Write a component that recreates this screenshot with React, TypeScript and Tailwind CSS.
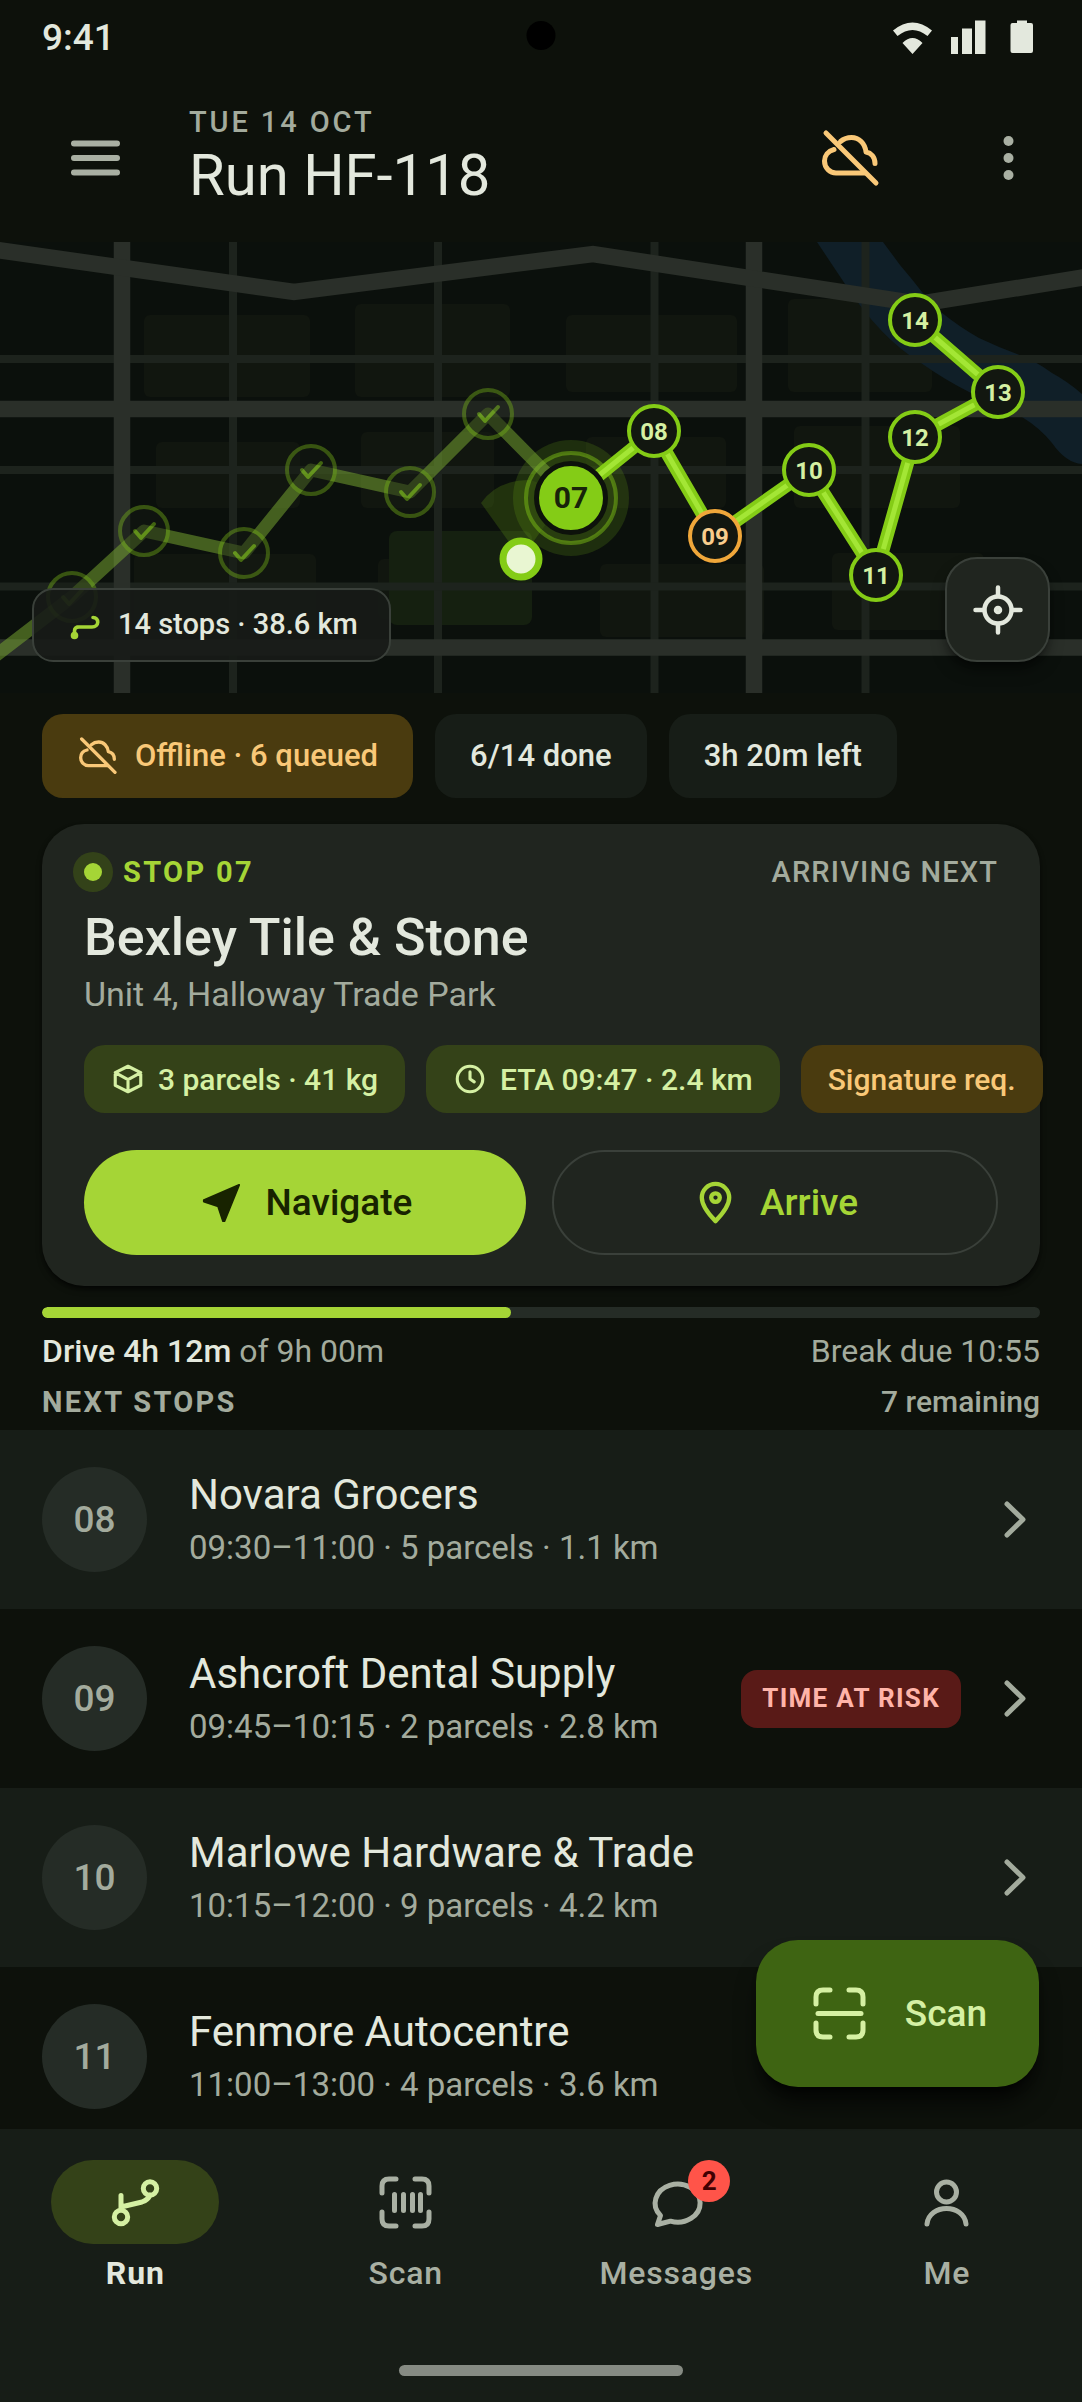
import { ReactNode } from "react";

type IconProps = { className?: string };

const upcoming = [
  { id: "08", x: 654, y: 189 },
  { id: "09", x: 715, y: 294, warn: true },
  { id: "10", x: 809, y: 228 },
  { id: "11", x: 876, y: 333 },
  { id: "12", x: 915, y: 195 },
  { id: "13", x: 998, y: 150 },
  { id: "14", x: 915, y: 78 },
];

const visited = [
  { x: 72, y: 355 },
  { x: 144, y: 289 },
  { x: 244, y: 311 },
  { x: 311, y: 228 },
  { x: 410, y: 250 },
  { x: 488, y: 172 },
];

const blocks = [
  [144, 73, 166, 82],
  [355, 62, 155, 93],
  [156, 200, 144, 66],
  [361, 190, 133, 76],
  [134, 312, 182, 76],
  [378, 317, 140, 60],
  [566, 73, 171, 77],
  [788, 57, 144, 93],
  [586, 195, 140, 71],
  [794, 184, 166, 82],
  [600, 322, 164, 73],
  [832, 311, 152, 77],
];

const stops = [
  { id: "08", name: "Novara Grocers", info: "09:30–11:00 · 5 parcels · 1.1 km" },
  {
    id: "09",
    name: "Ashcroft Dental Supply",
    info: "09:45–10:15 · 2 parcels · 2.8 km",
    risk: "TIME AT RISK",
  },
  { id: "10", name: "Marlowe Hardware & Trade", info: "10:15–12:00 · 9 parcels · 4.2 km" },
  { id: "11", name: "Fenmore Autocentre", info: "11:00–13:00 · 4 parcels · 3.6 km" },
];

function Icon({ className, box = 63, width = 5, children }: IconProps & { box?: number; width?: number; children: ReactNode }) {
  return (
    <svg
      viewBox={`0 0 ${box} ${box}`}
      className={className}
      fill="none"
      stroke="currentColor"
      strokeWidth={width}
      strokeLinecap="round"
      strokeLinejoin="round"
      aria-hidden="true"
    >
      {children}
    </svg>
  );
}

const CloudOff = ({ className }: IconProps) => (
  <Icon className={className}>
    <path d="M21.5 14.5C25 11.5 29 10.5 32.5 10.5C40 10.5 46 16.5 47 25C52 26 56 30 56 36.5" />
    <path d="M15 22.5C9 24 5.5 28.5 5.5 34C5.5 41 11 46 17 46H46" />
    <path d="M7 6L57 56" />
  </Icon>
);

const RunIcon = ({ className }: IconProps) => (
  <Icon className={className}>
    <circle cx="17" cy="46" r="6.7" />
    <circle cx="46" cy="17.5" r="6.7" />
    <path d="M17 24.5V38M17 36L38 31Q44 29 46 24" />
  </Icon>
);

const corners = "M8 22V15Q8 8 15 8H22M41 8H48Q55 8 55 15V22M55 41V48Q55 55 48 55H41M22 55H15Q8 55 8 48V41";

const BarcodeIcon = ({ className }: IconProps) => (
  <Icon className={className}>
    <path d={corners} />
    <path d="M20.5 23.5V39.5M29.5 23.5V39.5M38.5 23.5V39.5M46.5 23.5V39.5" />
  </Icon>
);

const ScanIcon = ({ className }: IconProps) => (
  <Icon className={className}>
    <path d={corners} />
    <path d="M10 31.5H53" />
  </Icon>
);

const MessageIcon = ({ className }: IconProps) => (
  <Icon className={className}>
    <path d="M25.5 50.2A22.5 19 0 1 0 15.5 44.5L12.5 53.5Z" />
  </Icon>
);

const PersonIcon = ({ className }: IconProps) => (
  <Icon className={className}>
    <circle cx="31.5" cy="21" r="10" />
    <path d="M12 53C13 43 22 37.5 31.5 37.5S50 43 51 53" />
  </Icon>
);

function StatusBar() {
  return (
    <div className="relative flex h-[74px] items-center justify-between pr-[48px] pl-[42px]">
      <span className="text-[37px] leading-none font-medium">9:41</span>
      <span className="absolute top-[21px] left-1/2 size-[29px] -translate-x-1/2 rounded-full bg-black" />
      <svg viewBox="0 0 142 36" className="h-[36px] w-[142px] fill-[#e3e8dd]" aria-hidden="true">
        <path d="M1 11.5Q20.5 -4.5 40 11.5L35.5 17Q20.5 5 5.5 17ZM10.5 24Q20.5 14 30.5 24L20.5 35Z" />
        <path d="M59 18H66V35H59ZM70 9.5H80V35H70ZM83 1.5H93.5V35H83Z" />
        <path d="M125 1.5H135V4H139Q141 4 141 6V32Q141 34 139 34H120.5Q118.5 34 118.5 32V6Q118.5 4 120.5 4H125Z" />
      </svg>
    </div>
  );
}

function Header() {
  return (
    <header className="flex h-[168px] items-center pr-[11px] pl-8">
      <button aria-label="Menu" className="grid size-[126px] place-items-center text-[#a9b0a3]">
        <Icon className="size-[63px]" width={6}>
          <path d="M10 16.5H53M10 31H53M10 45.5H53" />
        </Icon>
      </button>
      <div className="ml-[31px] flex-1 pb-2">
        <p className="text-[29px] leading-[42px] font-medium tracking-[0.1em] text-[#a3ab9d]">TUE 14 OCT</p>
        <h1 className="text-[58px] leading-[64px]">Run HF-118</h1>
      </div>
      <button aria-label="Offline" className="mr-8 grid size-[126px] place-items-center text-[#f9c878]">
        <CloudOff className="size-[63px]" />
      </button>
      <button aria-label="More" className="grid size-[126px] place-items-center text-[#a9b0a3]">
        <svg viewBox="0 0 63 63" className="size-[63px] fill-current" aria-hidden="true">
          <circle cx="31.5" cy="14" r="5" />
          <circle cx="31.5" cy="31" r="5" />
          <circle cx="31.5" cy="48" r="5" />
        </svg>
      </button>
    </header>
  );
}

function RouteMap() {
  const path = (points: { x: number; y: number }[]) => points.map((p) => `${p.x},${p.y}`).join(" ");
  const current = { x: 571, y: 256 };

  return (
    <section aria-label="Route map" className="relative h-[451px] overflow-hidden bg-[#0b100c]">
      <svg viewBox="0 0 1082 451" preserveAspectRatio="xMidYMid slice" className="size-full">
        {blocks.map(([x, y, w, h]) => (
          <rect key={`${x}-${y}`} x={x} y={y} width={w} height={h} rx="6" fill="#11160f" />
        ))}
        <rect x="389" y="289" width="143" height="94" rx="8" fill="#152010" />
        <path
          d="M817 0L845 42Q880 96 921 121Q945 138 971 151Q1003 162 1022 175Q1040 186 1052 201Q1066 221 1082 222V152Q1067 139 1052 131Q1036 119 1017 112Q998 105 979 96Q958 84 941 70Q932 61 922 50Q912 37 900 23L883 0Z"
          fill="#101f28"
        />
        <g stroke="#1d231d" strokeWidth="8">
          <path d="M233 0V451M438 0V451M654.5 0V451M865.5 0V451" />
          <path d="M0 117H1082M0 228H1082M0 344.5H1082" />
        </g>
        <g stroke="#2a2f29" strokeWidth="16.5" fill="none">
          <path d="M122 0V451M754 0V451M0 167H1082M0 405.5H1082" />
          <path d="M-10 7L294 50L593 12L919 62L1092 34" />
        </g>

        <path d="M521 317L481 261Q497 238 530 238Q549 243 561 261Z" fill="#84cc16" opacity="0.18" />
        <circle cx="571" cy="256" r="58" fill="#84cc16" opacity="0.16" />
        <circle cx="571" cy="256" r="45" fill="#2f4811" fillOpacity="0.6" stroke="#84cc16" strokeOpacity="0.45" strokeWidth="4" />
        <polyline
          points={path([{ x: -40, y: 441 }, ...visited, current])}
          fill="none"
          stroke="#78a832"
          strokeWidth="13"
          strokeLinejoin="round"
          opacity="0.52"
        />
        {visited.map((p) => (
          <g key={p.x} opacity="0.45">
            <circle cx={p.x} cy={p.y} r="24" fill="#161b14" stroke="#6fa818" strokeWidth="4" />
            <path
              d={`M${p.x - 9} ${p.y}l6 7l13 -14`}
              fill="none"
              stroke="#84cc16"
              strokeWidth="4"
              strokeLinecap="round"
              strokeLinejoin="round"
            />
          </g>
        ))}

        <polyline points={path([current, ...upcoming])} fill="none" stroke="#84cc16" strokeWidth="13" strokeLinejoin="round" />
        <polyline points={path([current, ...upcoming])} fill="none" stroke="#a3e635" strokeWidth="5" strokeLinejoin="round" />
        {upcoming.map((p) => (
          <g key={p.id}>
            <circle cx={p.x} cy={p.y} r="25" fill="#121710" stroke={p.warn ? "#f0a73a" : "#84cc16"} strokeWidth="4" />
            <text
              x={p.x}
              y={p.y + 9}
              textAnchor="middle"
              className={`text-[24px] font-bold ${p.warn ? "fill-[#f9cd8d]" : "fill-[#d5f0a3]"}`}
            >
              {p.id}
            </text>
          </g>
        ))}

        <circle cx="571" cy="256" r="34.5" fill="#84cc16" stroke="#0d120b" strokeWidth="5" />
        <text x="571" y="266" textAnchor="middle" className="fill-[#18230a] text-[30px] font-bold">
          07
        </text>
        <circle cx="521" cy="317" r="18" fill="#e9f6d2" stroke="#84cc16" strokeWidth="7" />
      </svg>

      <div className="absolute bottom-[31px] left-8 flex h-[74px] items-center gap-[11px] rounded-[21px] border-2 border-[#3a403a] bg-[#171b17]/90 px-[31px]">
        <Icon className="size-[42px] text-[#a5d536]" box={42} width={3.6}>
          <circle cx="9.5" cy="31.5" r="2" fill="currentColor" />
          <path d="M9.5 31V27Q9.5 23 14 23M12 23H27C34.5 23 34.5 13.5 28 13.5" />
        </Icon>
        <span className="text-[29px] font-medium">14 stops · 38.6 km</span>
      </div>
      <button
        aria-label="My location"
        className="absolute right-8 bottom-[31px] grid size-[105px] place-items-center rounded-[32px] border-2 border-[#3a403a] bg-[#20251f] shadow-lg shadow-black/50"
      >
        <Icon className="size-[52px]" box={52} width={4.5}>
          <circle cx="26" cy="26" r="13.5" />
          <path d="M26 3.5V12M26 40V48.5M3.5 26H12M40 26H48.5" />
          <circle cx="26" cy="26" r="2" />
        </Icon>
      </button>
    </section>
  );
}

function StatusChips() {
  return (
    <div className="flex gap-[22px] px-[42px] pt-[21px] text-[31px] font-medium">
      <span className="flex h-[84px] items-center gap-4 rounded-[21px] bg-[#4a3b0f] px-[35px] text-[#f9c878]">
        <CloudOff className="size-[42px]" />
        Offline · 6 queued
      </span>
      <span className="flex h-[84px] items-center rounded-[21px] bg-[#171d17] px-[35px]">6/14 done</span>
      <span className="flex h-[84px] items-center rounded-[21px] bg-[#171d17] px-[35px]">3h 20m left</span>
    </div>
  );
}

function CurrentStop() {
  return (
    <article className="mx-[42px] mt-[26px] rounded-[42px] bg-[#20251f] px-[42px] pt-[27px] pb-[31px] shadow-md shadow-black/60">
      <div className="flex items-center justify-between text-[29px] leading-[42px]">
        <span className="flex items-center gap-[21px] font-bold tracking-[0.08em] text-[#a5d536]">
          <span className="size-[18px] rounded-full bg-[#a5d536] ring-[11px] ring-[#334219]" />
          STOP 07
        </span>
        <span className="font-medium tracking-[0.04em] text-[#a3ab9d]">ARRIVING NEXT</span>
      </div>
      <h2 className="mt-[11px] text-[52px] leading-[68px] font-medium">Bexley Tile & Stone</h2>
      <p className="text-[34px] leading-[44px] text-[#a3ab9d]">Unit 4, Halloway Trade Park</p>

      <div className="mt-[29px] flex gap-[21px] text-[30px] font-medium whitespace-nowrap">
        <span className="flex h-[68px] shrink-0 items-center gap-[13px] rounded-[21px] bg-[#344218] px-[27px] text-[#d5f0a3]">
          <Icon className="size-[34px]" box={24} width={2.2}>
            <path d="M12 3l9 4.5v9L12 21l-9-4.5v-9zM3 7.5l9 5 9-5M12 12.5V21" />
          </Icon>
          3 parcels · 41 kg
        </span>
        <span className="flex h-[68px] shrink-0 items-center gap-[13px] rounded-[21px] bg-[#344218] px-[27px] text-[#d5f0a3]">
          <Icon className="size-[34px]" box={24} width={2.2}>
            <circle cx="12" cy="12" r="9" />
            <path d="M12 7v5l3 2" />
          </Icon>
          ETA 09:47 · 2.4 km
        </span>
        <span className="flex h-[68px] shrink-0 items-center rounded-[21px] bg-[#4a3b0f] px-[27px] text-[#f9c878]">
          Signature req.
        </span>
      </div>

      <div className="mt-[37px] flex gap-[26px] text-[37px] font-medium">
        <button className="flex h-[105px] flex-1 items-center justify-center gap-[21px] rounded-full bg-[#a5d536] text-[#182300]">
          <Icon className="size-[47px]" box={24} width={1}>
            <path d="M21 3L3 10.8V11.5L10.3 14L12.8 21.5H13.5Z" fill="currentColor" />
          </Icon>
          Navigate
        </button>
        <button className="flex h-[105px] flex-1 items-center justify-center gap-[21px] rounded-full border-2 border-[#3a403a] text-[#a5d536]">
          <Icon className="size-[47px]" box={24} width={2.2}>
            <path d="M12 21.5C8 17.5 5 13.5 5 9.5a7 7 0 0 1 14 0c0 4-3 8-7 12z" />
            <circle cx="12" cy="9.5" r="2.2" />
          </Icon>
          Arrive
        </button>
      </div>
    </article>
  );
}

function DriveTime() {
  return (
    <section className="mx-[42px] mt-[21px]">
      <div className="h-[11px] overflow-hidden rounded-full bg-[#252c26]">
        <div className="h-full w-[47%] rounded-full bg-[#a5d536]" />
      </div>
      <div className="mt-3 flex justify-between text-[32px] leading-[42px] text-[#a3ab9d]">
        <span>
          <b className="font-medium text-[#e3e8dd]">Drive 4h 12m</b> of 9h 00m
        </span>
        <span>Break due 10:55</span>
      </div>
    </section>
  );
}

function NextStops() {
  return (
    <section className="flex min-h-0 flex-1 flex-col">
      <div className="flex justify-between px-[42px] pt-[9px] pb-[7px] leading-[42px] text-[#a3ab9d]">
        <h3 className="text-[29px] font-bold tracking-[0.08em]">NEXT STOPS</h3>
        <span className="text-[30px] font-medium">7 remaining</span>
      </div>
      <div className="relative min-h-0 flex-1">
        <ul className="h-full overflow-y-auto [scrollbar-width:none]">
          {stops.map((stop) => (
            <li key={stop.id} className="odd:bg-[#171d17]">
              <button className="flex h-[179px] w-full items-center pr-[36px] pl-[42px] text-left">
                <span className="grid size-[105px] shrink-0 place-items-center rounded-full bg-[#252c26] text-[37px] font-medium text-[#a3ab9d]">
                  {stop.id}
                </span>
                <span className="ml-[42px] flex-1 pb-[2px]">
                  <span className="block text-[42px] leading-[58px]">{stop.name}</span>
                  <span className="block text-[33px] leading-[48px] text-[#a3ab9d]">{stop.info}</span>
                </span>
                {stop.risk && (
                  <span className="flex h-[58px] items-center rounded-[16px] bg-[#591a17] px-[21px] text-[26px] font-bold tracking-wider text-[#ffb4a9]">
                    {stop.risk}
                  </span>
                )}
                <Icon className="ml-[22px] size-[63px]">
                  <path d="M24 16L40 31.5L24 47" className="stroke-[#a3ab9d]" />
                </Icon>
              </button>
            </li>
          ))}
        </ul>
        <button className="absolute right-[43px] bottom-[42px] flex h-[147px] items-center gap-[34px] rounded-[42px] bg-[#3e6412] px-[52px] text-[37px] font-medium text-[#d5f0a3] shadow-xl shadow-black/70">
          <ScanIcon className="size-[63px]" />
          Scan
        </button>
      </div>
    </section>
  );
}

function NavItem({ label, active, badge, children }: { label: string; active?: boolean; badge?: number; children: ReactNode }) {
  return (
    <a href="#" className={`flex flex-1 flex-col items-center ${active ? "text-[#e3e8dd]" : "text-[#a9b0a3]"}`}>
      <span
        className={`relative grid h-[84px] w-[168px] place-items-center rounded-full ${active ? "bg-[#344218] text-[#d5f0a3]" : ""}`}
      >
        {children}
        {badge && (
          <span className="absolute top-0 right-[30px] grid size-[42px] place-items-center rounded-full bg-[#ff5449] text-[26px] font-bold text-[#410002]">
            {badge}
          </span>
        )}
      </span>
      <span className={`mt-[8px] text-[32px] leading-[42px] tracking-wide ${active ? "font-bold" : "font-medium"}`}>{label}</span>
    </a>
  );
}

function BottomNav() {
  return (
    <footer className="bg-[#171d17] pt-[31px] pb-[26px]">
      <nav className="flex">
        <NavItem label="Run" active>
          <RunIcon className="size-[63px]" />
        </NavItem>
        <NavItem label="Scan">
          <BarcodeIcon className="size-[63px]" />
        </NavItem>
        <NavItem label="Messages" badge={2}>
          <MessageIcon className="size-[63px]" />
        </NavItem>
        <NavItem label="Me">
          <PersonIcon className="size-[63px]" />
        </NavItem>
      </nav>
      <div className="mx-auto mt-[71px] h-[11px] w-[284px] rounded-full bg-[#868b83]" />
    </footer>
  );
}

export default function App() {
  return (
    <main className="flex h-screen flex-col bg-[#0d110b] font-[Roboto,sans-serif] text-[#e3e8dd]">
      <StatusBar />
      <Header />
      <RouteMap />
      <StatusChips />
      <CurrentStop />
      <DriveTime />
      <NextStops />
      <BottomNav />
    </main>
  );
}
